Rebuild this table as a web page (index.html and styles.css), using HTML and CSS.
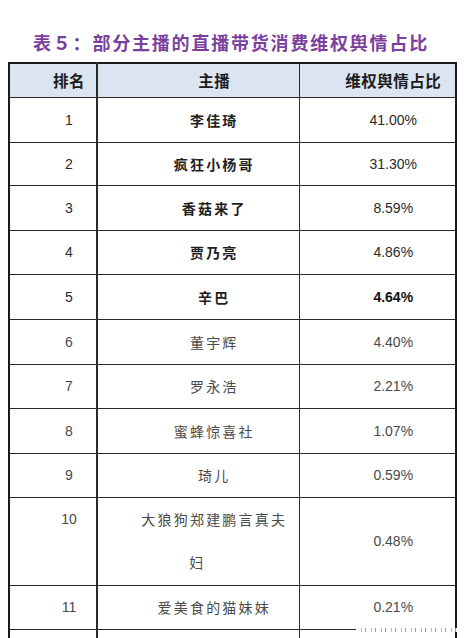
FILE: index.html
```html
<!DOCTYPE html>
<html lang="zh">
<head>
<meta charset="utf-8">
<link rel="stylesheet" href="styles.css">
</head>
<body>
<h1 class="title">表５：部分主播的直播带货消费维权舆情占比</h1>
<table class="tbl">
  <colgroup><col class="c1"><col class="c2"><col class="c3"></colgroup>
  <thead>
    <tr class="head"><th>排名</th><th>主播</th><th>维权舆情占比</th></tr>
  </thead>
  <tbody>
    <tr class="r45 top"><td class="num">1</td><td class="name">李佳琦</td><td class="pct">41.00%</td></tr>
    <tr class="r43 top"><td class="num">2</td><td class="name">疯狂小杨哥</td><td class="pct">31.30%</td></tr>
    <tr class="r45 top"><td class="num">3</td><td class="name">香菇来了</td><td class="pct">8.59%</td></tr>
    <tr class="r44 top"><td class="num">4</td><td class="name">贾乃亮</td><td class="pct">4.86%</td></tr>
    <tr class="r45 top strong"><td class="num">5</td><td class="name">辛巴</td><td class="pct">4.64%</td></tr>
    <tr class="r45 rest"><td class="num">6</td><td class="name">董宇辉</td><td class="pct">4.40%</td></tr>
    <tr class="r44 rest"><td class="num">7</td><td class="name">罗永浩</td><td class="pct">2.21%</td></tr>
    <tr class="r45 rest"><td class="num">8</td><td class="name">蜜蜂惊喜社</td><td class="pct">1.07%</td></tr>
    <tr class="r44 rest"><td class="num">9</td><td class="name">琦儿</td><td class="pct">0.59%</td></tr>
    <tr class="r88 rest tall"><td class="num">10</td><td class="name"><span class="l1">大狼狗郑建鹏言真夫</span><span class="l2">妇</span></td><td class="pct">0.48%</td></tr>
    <tr class="r44 rest"><td class="num">11</td><td class="name">爱美食的猫妹妹</td><td class="pct">0.21%</td></tr>
    <tr class="r44 rest last"><td class="num"></td><td class="name"></td><td class="pct"><span class="wm"></span></td></tr>
  </tbody>
</table>
</body>
</html>
```
FILE: styles.css
```css
html, body {
  margin: 0;
  padding: 0;
  background: #fff;
  overflow: hidden;
}
body {
  padding: 0 8px;
  font-family: "Liberation Sans", "Noto Sans CJK SC", sans-serif;
  color: #222;
}
.title {
  margin: 30px 0 8px 0;
  padding-left: 25px;
  height: 24px;
  line-height: 24px;
  font-family: "Noto Sans CJK SC", sans-serif;
  font-size: 18px;
  font-weight: 700;
  letter-spacing: 1.8px;
  color: #7b3f9e;
  white-space: nowrap;
}
.tbl {
  border-collapse: collapse;
  width: 447px;
  table-layout: fixed;
  border: 2px solid #1a1a1a;
}
.c1 { width: 88px; }
.c2 { width: 202px; }
.c3 { width: 157px; }
.tbl th, .tbl td {
  border: 1.5px solid #2a2a2a;
  padding: 0 0 0 32px;
  text-align: center;
  vertical-align: middle;
}
.tbl th:first-child, .tbl td:first-child { border-right-width: 2px; }
.head { height: 34px; background: #dbe5f2; }
.head th {
  font-family: "Noto Sans CJK SC", sans-serif;
  font-size: 15.5px;
  font-weight: 700;
  letter-spacing: 0.5px;
  color: #1c1c1c;
}
.r43 { height: 43px; }
.r44 { height: 44px; }
.r45 { height: 45px; }
.r88 { height: 88px; }
.num, .pct {
  font-family: "Liberation Sans", sans-serif;
  font-size: 14px;
}
.name {
  font-family: "Noto Sans CJK SC", sans-serif;
  font-size: 14px;
  letter-spacing: 2.2px;
}
.top .num, .top .pct { color: #2a2a2a; }
.top .name { color: #1e1e1e; font-weight: 700; }
.strong .pct { font-weight: 700; color: #111; }
.rest .num, .rest .pct { color: #4a4a4a; }
.rest .name { color: #4a4a4a; }
.tall .num, .tall .name { vertical-align: top; }
.tall .num { line-height: 43px; }
.tall .name { line-height: 43px; }
.l1, .l2 { display: block; }
.l2 { padding-right: 34px; }
.last .pct { position: relative; }
.wm {
  position: absolute;
  left: 56px;
  right: -2px;
  top: -2px;
  height: 4px;
  background: repeating-linear-gradient(90deg, #fff 0 5px, #bbb 5px 6px, #fff 6px 9px, #999 9px 10px);
}
```
